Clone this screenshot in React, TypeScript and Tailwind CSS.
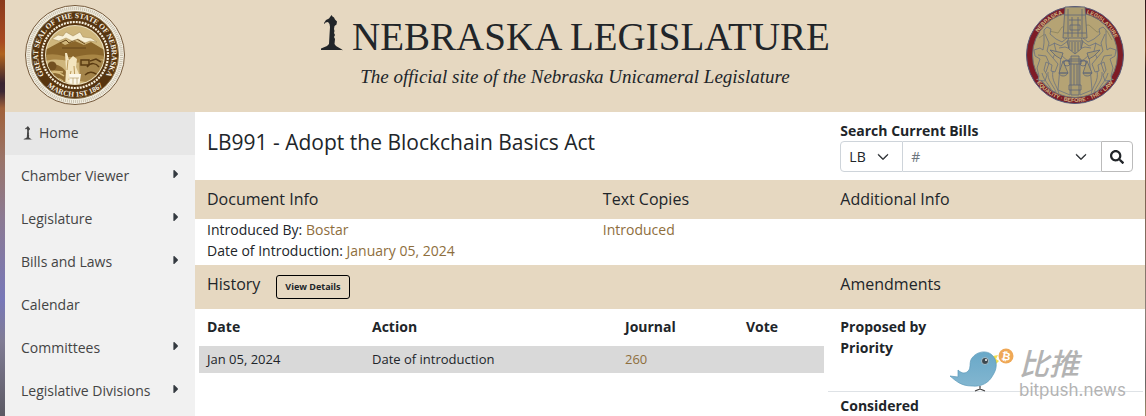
import type { ReactNode } from 'react'
import { FaCaretRight, FaSearch } from 'react-icons/fa'
import { BsChevronDown } from 'react-icons/bs'

const menu = [
  { label: 'Chamber Viewer', sub: true },
  { label: 'Legislature', sub: true },
  { label: 'Bills and Laws', sub: true },
  { label: 'Calendar', sub: false },
  { label: 'Committees', sub: true },
  { label: 'Legislative Divisions', sub: true },
]

function Sower({ className }: { className: string }) {
  return (
    <svg viewBox="0 0 24 36" className={className} fill="currentColor" aria-hidden="true">
      <path d="M11.500 0l1 1.500 1.500 1 1 2 2 2-.5 3-2 1.500-.5 3 .5 2-.5 2 1 2-1 2 1 2-.5 5 1.500 2 6 3.500 1 1V35H1v-1.500L7 31l2-2 .5-9 .5-8-.5-3-1.500-2L5.500 7.500 4.500 9 4 8l2-3 3-1.500z" />
    </svg>
  )
}

function StateSeal() {
  return (
    <svg viewBox="0 0 100 100" className="size-25" role="img" aria-label="Great Seal of the State of Nebraska">
      <defs>
        <path id="seal-top" d="M23.500 75.500A36.800 36.800 0 1 1 76.500 75.500" />
        <path id="seal-bottom" d="M18 77A42 42 0 0 0 82 77" />
        <clipPath id="seal-clip"><circle cx="50" cy="50" r="29" /></clipPath>
      </defs>
      <circle cx="50" cy="50" r="49.500" fill="#f3efe2" stroke="#74583a" />
      <circle cx="50" cy="50" r="46.500" fill="none" stroke="#8d7c62" strokeWidth="3" strokeDasharray="1 1" opacity=".4" />
      <circle cx="50" cy="50" r="43.500" fill="#57350f" stroke="#8a734d" />
      <circle cx="50" cy="50" r="33" fill="none" stroke="#f6f0df" strokeWidth="2.200" strokeDasharray="2 1" />
      <circle cx="50" cy="50" r="30" fill="#e9dfbf" />
      <g clipPath="url(#seal-clip)">
        <path d="M18 18h64v64H18z" fill="#cfb67c" />
        <path d="M20 45l15-8 5 3 10-4 9 4 7-3 15 9v6H20z" fill="#8a662b" />
        <path d="M35 38l6-3 3 3 8-4 8 5M37 43h24" fill="none" stroke="#65451a" />
        <path d="M27 34l6-4 5 1 3-4 7 4 7-4 3 5 8 1 6 4-7-1-5 2-7-4-6 2-6-3-7 3z" fill="#f8f0d6" stroke="#a18752" strokeWidth=".5" />
        <path d="M20 50c15-3 20 4 30 2s15-4 30-1v4c-18-3-22 5-34 2s-16-3-26-1z" fill="#a98645" />
        <path d="M22 62c8-6 17 0 21 8v14H22z" fill="#8b6830" />
        <path d="M23 71c3-5 10-5 16 0M25 77c3-4 8-5 13-1M26 66l12 1" fill="none" stroke="#d5ba7b" strokeWidth="1.500" />
        <circle cx="27" cy="61" r="4.500" fill="#725020" />
        <path d="M54 56l5-3 6 3 7-3 9 4v17l-9 5-17-3z" fill="#a4844a" />
        <path d="M56 55h8v5h-8zM62 62c4-5 9-4 12 0M60 70c5-5 9-2 13 0M65 56l6-2 5 3" fill="none" stroke="#5a3b12" strokeWidth="1.500" />
        <path d="M40 48l2 0 2 7 4-4 4 3-1 8 3 7v13H40l1-17z" fill="#f3e5bf" />
        <path d="M43 55l-1 10M49 61l1 14M46 66l-2 9" stroke="#ba9a5c" />
        <path d="M44 69h12l-2 13h-9z" fill="#fbf6e7" />
        <path d="M45 73h9M48 73v9M52 73v9" stroke="#b59b66" strokeWidth=".7" />
      </g>
      <g fill="#f7f1e1" fontFamily="Liberation Serif, serif" fontWeight="bold" fontSize="7.500">
        <text><textPath href="#seal-top" startOffset="50%" textAnchor="middle">GREAT SEAL OF THE STATE OF NEBRASKA</textPath></text>
        <text><textPath href="#seal-bottom" startOffset="50%" textAnchor="middle">MARCH 1ST 1867</textPath></text>
      </g>
    </svg>
  )
}

function Figure() {
  return (
    <g fill="none" stroke="#6a7180" strokeWidth=".8" strokeLinejoin="round">
      <path d="M19 25l3-3 4 2-1 5 6 5 6 3 5-4-1-4 3 1-1 6-7 5-7-3 2 8-3 7 5 6-3 8-4-1 1-6-6-3-2 8 3 5-2 6-7-1 1-4-2-8 3-9-5-3-1-6 6-2 3 2 1-7z" fill="#b3a272" />
      <path d="M20 29l4 9-2 8 6 7M13 50l8 1 3 7-3 9M30 38l-6 3M34 43l6-1 6 2" />
      <path d="M12 74c5 3 9 4 13 13M17 68c2 8 7 11 11 20M23 67c-1 8 5 13 8 20M28 66c-2 10 4 14 6 23" />
      <path d="M29 48l7 2-3 35 12 5V58l-9-8" />
    </g>
  )
}

function LegislatureSeal() {
  return (
    <svg viewBox="0 0 100 100" className="size-25" role="img" aria-label="Nebraska Legislature, Equality Before the Law">
      <defs>
        <path id="leg-top" d="M7 50A43 43 0 0 1 93 50" />
        <path id="leg-bottom" d="M3 50A47 47 0 0 0 97 50" />
      </defs>
      <circle cx="50" cy="50" r="48.500" fill="#7e1c26" stroke="#545977" />
      <circle cx="50" cy="50" r="42.500" fill="#b5a374" stroke="#6b6c70" />
      <path d="M14 33l10-7 9 2 4-6 27-2 8 7 10-1 5 9" fill="none" stroke="#938961" />
      <Figure />
      <g transform="translate(100 0) scale(-1 1)"><Figure /></g>
      <g fill="#ab9c70" stroke="#5d6679" strokeWidth=".8">
        <path d="M40 2h20l2 31H38z" />
        <path d="M43 4v28M47 12v20M53 12v20M57 4v28M40 10h20M44 15h12M39 28h22M45 20h10v5H45z" fill="none" />
        <path d="M42 36h16l-2 8-6 5-6-5z" />
        <path d="M44 37v6M47 37v9M50 37v11M53 37v9M56 37v6" />
        <path d="M25 45l13 3-2 6-5-3zM75 45l-13 3 2 6 5-3z" />
        <path d="M46 51h8v39h-8zM44 54h12v5H44zM44 80h12v5H44zM49 59v21M52 59v21" />
        <path d="M38 56h24M38 56l-4 12h9zM62 56l-4 12h9zM34 68c1 4 7 4 9 0zM58 68c1 4 7 4 9 0z" />
        <circle cx="42" cy="58" r="3" fill="none" />
        <circle cx="58" cy="58" r="3" fill="none" />
      </g>
      <g fill="#d0bb88" fontFamily="Liberation Sans, sans-serif" fontWeight="bold" fontSize="5.500">
        <text><textPath href="#leg-top" startOffset="29%" textAnchor="middle">NEBRASKA</textPath></text>
        <text><textPath href="#leg-top" startOffset="73%" textAnchor="middle">LEGISLATURE</textPath></text>
        <text><textPath href="#leg-bottom" startOffset="50%" textAnchor="middle">· EQUALITY · BEFORE · THE · LAW ·</textPath></text>
      </g>
    </svg>
  )
}

function Bird() {
  return (
    <svg viewBox="0 0 66 44" className="h-11 w-[66px]" aria-hidden="true">
      <defs>
        <linearGradient id="bird" x1="0" y1="0" x2="0" y2="1">
          <stop offset="0" stopColor="#69a8c8" />
          <stop offset="1" stopColor="#82b6d0" />
        </linearGradient>
      </defs>
      <path d="M44 8l5-1-2 4 3 2-4 4z" fill="#f4df4d" />
      <path d="M1 28l8 1 0-7c4 4 8 4 11 0 2-4 0-8 3-12C28 3 38 2 43 7c6 6 5 14 1 20-4 8-12 12-21 11C12 38 7 33 1 28z" fill="url(#bird)" stroke="#5b9ab9" strokeWidth=".7" />
      <circle cx="36" cy="13" r="3.500" fill="#3b4850" stroke="#c8dce4" strokeWidth=".7" />
      <circle cx="37" cy="12" r="1" fill="#fff" />
      <path d="M31 38v3M26 43l5-2 5 2" fill="none" stroke="#444" strokeWidth="1.200" />
      <circle cx="57" cy="8" r="7.500" fill="#efa856" />
      <text x="57" y="12" textAnchor="middle" fontSize="11" fontWeight="bold" fill="#fff" fontFamily="DejaVu Sans, sans-serif" transform="rotate(10 57 8)">₿</text>
    </svg>
  )
}

function Band({ children }: { children: ReactNode }) {
  return <div className="grid grid-cols-12 bg-[#e6d8c1] text-base leading-5">{children}</div>
}

export default function App() {
  return (
    <div className="flex min-h-screen bg-white font-['Open_Sans','Noto_Sans',sans-serif] text-sm leading-[21px] text-[#212529]">
      <div className="w-[5px] shrink-0 bg-[linear-gradient(#8a3a1c_0%,#a84a20_10%,#b0641f_13%,#3a2430_20%,#3c2834_22%,#a06038_26%,#9a7468_38%,#8c7a92_52%,#7878b8_72%,#807c94_82%,#5c5a64_100%)]" />
      <div className="min-w-0 flex-1">
        <header className="flex h-28 items-start justify-between bg-[#e6d8c1] px-5 pt-[5px] font-['Liberation_Serif',serif]">
          <StateSeal />
          <div className="pt-2 text-center">
            <h1 className="flex items-center justify-center gap-2 text-[39px] leading-[48px]">
              <Sower className="mb-2 h-9 w-6" />
              NEBRASKA LEGISLATURE
            </h1>
            <p className="pt-1 text-[19px] leading-6 italic">The official site of the Nebraska Unicameral Legislature</p>
          </div>
          <LegislatureSeal />
        </header>

        <div className="flex">
          <nav className="w-[190px] shrink-0 bg-[#f1f1f1] text-[#444]">
            <a href="#home" className="flex h-[43px] items-center gap-1 bg-[#e7e7e7] px-4 pb-0.5">
              <Sower className="h-3.5 w-3.5" />
              Home
            </a>
            {menu.map((item) => (
              <a key={item.label} href="#menu" className="flex h-[43px] items-center justify-between pr-3 pb-0.5 pl-4">
                {item.label}
                {item.sub && <FaCaretRight className="mb-1 size-3.5 text-[#343a40]" />}
              </a>
            ))}
          </nav>

          <main className="relative min-w-0 flex-1">
            <div className="grid h-[68px] grid-cols-12">
              <h2 className="col-span-8 px-3 pt-4 text-[21px] leading-7">LB991 - Adopt the Blockchain Basics Act</h2>
              <form className="col-span-4 px-3 pt-2">
                <label htmlFor="bill" className="block font-bold">Search Current Bills</label>
                <div className="flex h-[31px]">
                  <div className="relative w-[63px]">
                    <select aria-label="Bill type" className="h-full w-full appearance-none rounded-l border border-[#ced4da] bg-white pl-2">
                      <option>LB</option>
                      <option>LR</option>
                    </select>
                    <BsChevronDown className="pointer-events-none absolute top-2.5 right-3.5 size-3 stroke-1" />
                  </div>
                  <div className="relative min-w-0 flex-1">
                    <input id="bill" type="text" placeholder="#" className="h-full w-full border-y border-[#ced4da] px-2 placeholder:text-[#6c757d]" />
                    <BsChevronDown className="pointer-events-none absolute top-2.5 right-3.5 size-3 stroke-1" />
                  </div>
                  <button type="button" aria-label="Search" className="flex w-8 items-center justify-center rounded-r border border-[#bbb] text-[#212529]">
                    <FaSearch className="size-3.5" />
                  </button>
                </div>
              </form>
            </div>

            <Band>
              <h3 className="col-span-5 px-3 pt-[9px] pb-2.5">Document Info</h3>
              <h3 className="col-span-3 px-3 pt-[9px]">Text Copies</h3>
              <h3 className="col-span-4 px-3 pt-[9px]">Additional Info</h3>
            </Band>
            <div className="grid grid-cols-12 pb-1">
              <ul className="col-span-5 px-3">
                <li>Introduced By: <a href="#bostar" className="text-[#8e6e3d]">Bostar</a></li>
                <li>Date of Introduction: <a href="#date" className="text-[#8e6e3d]">January 05, 2024</a></li>
              </ul>
              <div className="col-span-3 px-3">
                <a href="#introduced" className="text-[#8e6e3d]">Introduced</a>
              </div>
            </div>

            <Band>
              <div className="col-span-8 flex h-11 items-start gap-4 px-3">
                <h3 className="pt-[9px]">History</h3>
                <button type="button" className="mt-2.5 h-6 rounded-[3px] border border-black px-2 text-[9px] leading-4 font-bold">View Details</button>
              </div>
              <h3 className="col-span-4 px-3 pt-[9px]">Amendments</h3>
            </Band>
            <div className="grid grid-cols-12">
              <div className="col-span-8 px-1">
                <table className="w-full table-fixed text-left">
                  <colgroup>
                    <col className="w-[165px]" />
                    <col className="w-[253px]" />
                    <col className="w-[121px]" />
                    <col />
                  </colgroup>
                  <thead>
                    <tr className="h-[37px]">
                      <th className="px-2 pb-0.5">Date</th>
                      <th className="px-2 pb-0.5">Action</th>
                      <th className="px-2 pb-0.5">Journal</th>
                      <th className="px-2 pb-0.5">Vote</th>
                    </tr>
                  </thead>
                  <tbody className="text-[13px]">
                    <tr className="h-[27px] bg-[#d9d9d9]">
                      <td className="px-2">Jan 05, 2024</td>
                      <td className="px-2">Date of introduction</td>
                      <td className="px-2"><a href="#journal" className="text-[#8e6e3d]">260</a></td>
                      <td className="px-2"></td>
                    </tr>
                  </tbody>
                </table>
              </div>
              <div className="col-span-4 pr-0.5 font-bold">
                <div className="h-[83px] border-b border-[#dee2e6] px-3 pt-[7px]">
                  <p>Proposed by</p>
                  <p>Priority</p>
                </div>
                <p className="px-3 pt-[3px]">Considered</p>
              </div>
            </div>

            {/* news agency watermark */}
            <div className="pointer-events-none absolute top-[232px] right-[19px] flex items-start gap-1 text-[#b3b3b3]">
              <div className="pt-1"><Bird /></div>
              <div>
                <p className="font-['Noto_Sans_CJK_SC',sans-serif] text-[30px] leading-9 font-medium italic">比推</p>
                <p className="font-['Inter',sans-serif] text-[17px] leading-5">bitpush.news</p>
              </div>
            </div>
          </main>
        </div>
      </div>
      <div className="w-px shrink-0 bg-[linear-gradient(#2a1418_0%,#7a4a28_12%,#2c1c1c_17%,#7a5c48_40%,#8c8078_75%,#6a6664_92%,#a08c68_100%)]" />
    </div>
  )
}
